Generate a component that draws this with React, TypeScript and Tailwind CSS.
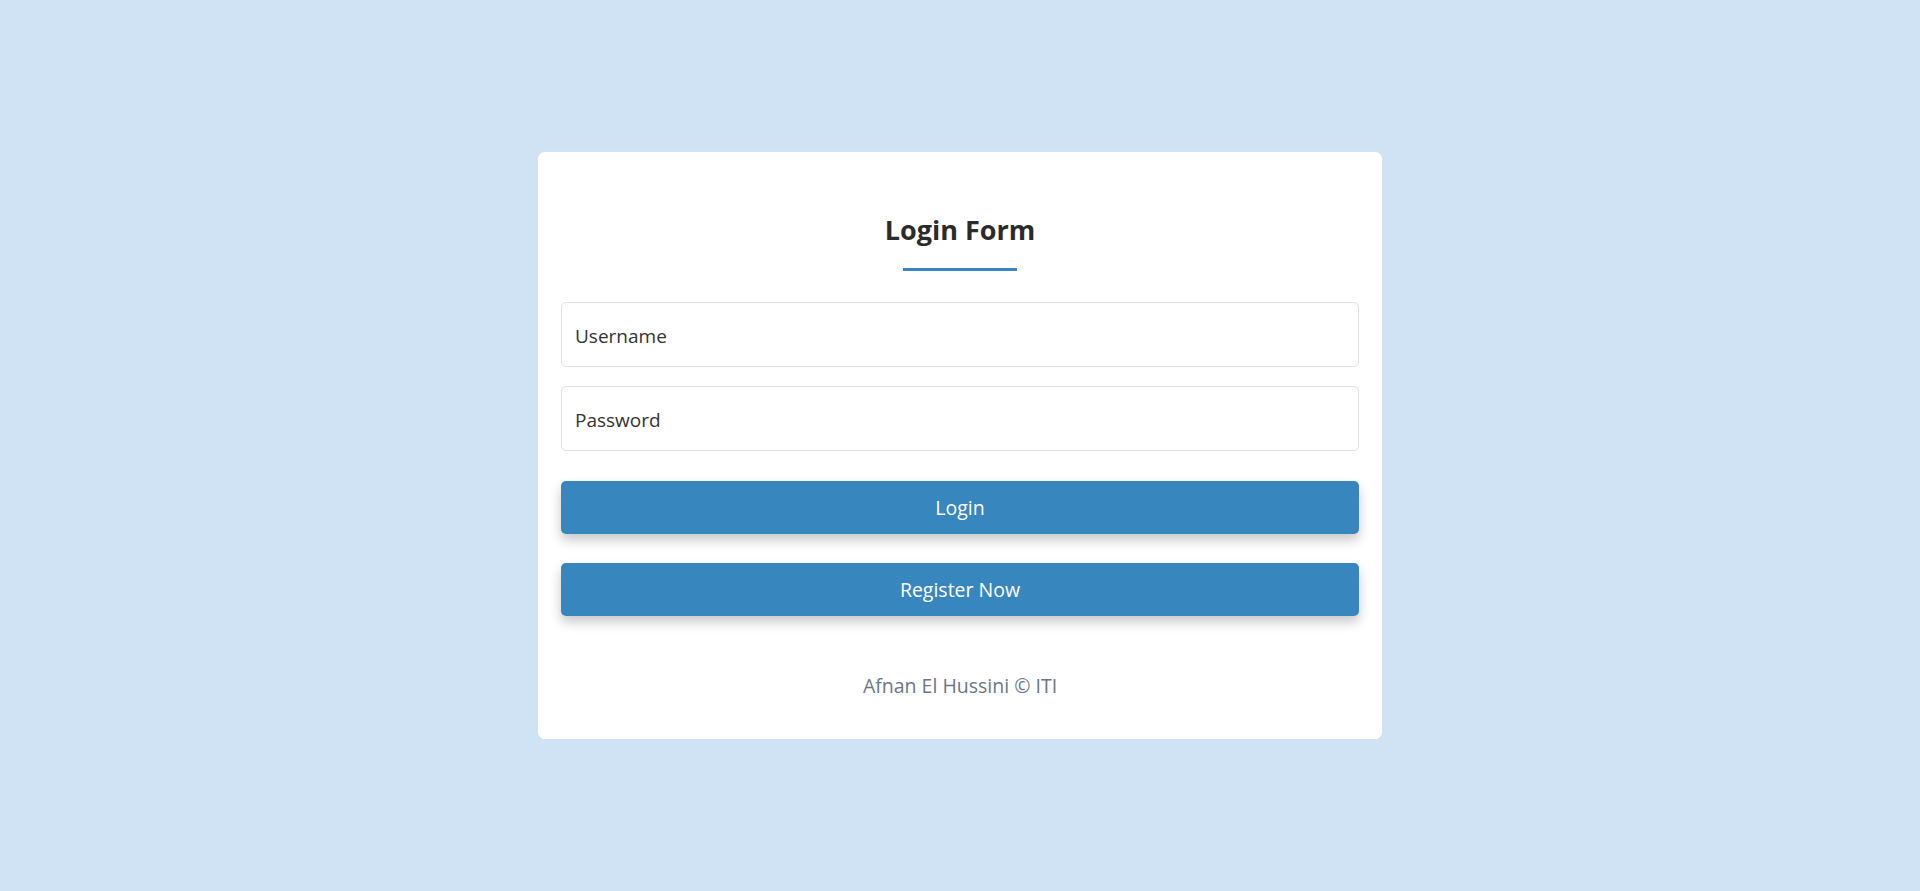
import { useState } from 'react';

export default function App() {
  const [username, setUsername] = useState('');
  const [password, setPassword] = useState('');

  return (
    <div
      className="min-h-screen w-full bg-[#cfe3f4] flex items-center justify-center"
      style={{ fontFamily: '"Open Sans", "Noto Sans", sans-serif' }}
    >
      <div className="w-[846px] h-[589px] bg-white rounded-[8px] border border-[#dbe3ea] px-[23px] pt-[60px] flex flex-col">
        <h2 className="text-center text-[27px] leading-[36px] font-bold text-[#2b2b2b]">Login Form</h2>
        <div className="mx-auto mt-[20px] w-[114px] h-[3px] bg-[#3784c4]" />

        <form className="mt-[31px] flex flex-col" onSubmit={(e) => e.preventDefault()}>
          <input
            type="text"
            placeholder="Username"
            value={username}
            onChange={(e) => setUsername(e.target.value)}
            className="h-[65px] w-full rounded-[5px] border border-[#e1e1e1] px-[13px] pt-[2px] text-[19px] text-[#333] placeholder:text-[#333] outline-none"
          />
          <input
            type="password"
            placeholder="Password"
            value={password}
            onChange={(e) => setPassword(e.target.value)}
            className="mt-[19px] h-[65px] w-full rounded-[5px] border border-[#e1e1e1] px-[13px] pt-[2px] text-[19px] text-[#333] placeholder:text-[#333] outline-none"
          />
          <button
            type="submit"
            className="mt-[30px] h-[53px] w-full rounded-[5px] bg-[#3886be] text-white text-[19.5px] shadow-[0_6px_12px_rgba(0,0,0,0.22)]"
          >
            Login
          </button>
          <button
            type="button"
            className="mt-[29px] h-[53px] w-full rounded-[5px] bg-[#3886be] text-white text-[19.5px] shadow-[0_6px_12px_rgba(0,0,0,0.22)]"
          >
            Register Now
          </button>
        </form>

        <p className="mt-[55px] text-center text-[19.5px] text-[#6c7686]">Afnan El Hussini © ITI</p>
      </div>
    </div>
  );
}
